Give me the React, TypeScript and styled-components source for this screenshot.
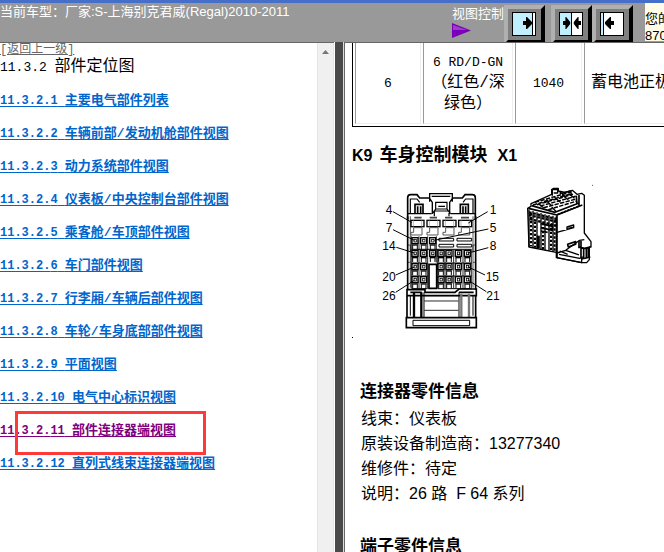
import React from "react";
import styled, { createGlobalStyle } from "styled-components";

const sans = `"Liberation Sans", "Noto Sans CJK SC", sans-serif`;
const mono = `"Liberation Mono", "Noto Sans CJK SC", monospace`;

const GlobalStyle = createGlobalStyle`
  * { box-sizing: border-box; }
  body { margin: 0; background: #fff; color: #000; font-family: ${sans}; }
`;

const Page = styled.div`
  display: grid;
  grid-template-rows: 42px minmax(0, 1fr);
  height: 100vh;
  overflow: hidden;
`;

const Header = styled.header`
  display: flex;
  align-items: flex-start;
  overflow: hidden;
  background: #999;
  border-top: 3px solid #456fc9;
  color: #fff;
  font-size: 13px;
  line-height: 18px;
  white-space: nowrap;
`;

const CarName = styled.div`
  flex: 1;
  min-width: 0;
  overflow: hidden;
`;

const ViewControl = styled.div`
  display: flex;
  flex-direction: column;
  width: 52px;
  padding-top: 2px;

  svg {
    display: block;
  }
`;

const ButtonGroup = styled.div`
  display: flex;
  padding-top: 2px;
`;

const PaneButton = styled.button<{ $gap?: boolean }>`
  flex: none;
  width: 41px;
  height: 39px;
  margin: 0 ${(p) => (p.$gap ? 6 : 0)}px 0 0;
  padding: 3px 4px 4px;
  background: #808080;
  border: 4px solid #000;
  border-top-color: #b0b0b0;
  border-left-color: #b0b0b0;
  overflow: hidden;

  svg {
    display: block;
  }
`;

const Notice = styled.div`
  width: 19px;
  height: 38px;
  margin-left: 12px;
  padding-top: 7px;
  overflow: hidden;
  background: #fffde8;
  color: #000;
  font-size: 13px;
  line-height: 17px;
`;

const Frames = styled.main`
  display: grid;
  grid-template-columns: minmax(0, 334fr) 10px minmax(0, 320fr);
  min-height: 0;
`;

const IndexFrame = styled.nav`
  display: flex;
  min-height: 0;
  overflow: hidden;
  border-top: 1px solid #666;
`;

const IndexBody = styled.div`
  flex: 1;
  min-width: 0;
  padding-top: 1px;
`;

const BackLink = styled.a`
  display: block;
  width: max-content;
  color: #666;
  font: 12px/13px ${mono};
  text-underline-offset: 1px;
`;

const IndexTitle = styled.h1`
  margin: 0;
  font: 16px/20px ${mono};
`;

const TitleNumber = styled.span`
  font-size: 13px;
`;

const IndexList = styled.ul`
  margin: 12px 0 0;
  padding: 0;
  list-style: none;
`;

const IndexItem = styled.li`
  position: relative;
  height: 33px;
  line-height: 18px;
  white-space: nowrap;
`;

const IndexLink = styled.a<{ $visited?: boolean }>`
  color: ${(p) => (p.$visited ? "#800080" : "#0066cc")};
  font: bold 13px/18px ${mono};
  text-underline-offset: 2px;
`;

const LinkNumber = styled.span`
  font-size: 12px;
`;

const Highlight = styled.span`
  position: absolute;
  top: -9px;
  left: 15px;
  width: 191px;
  height: 44px;
  border: 3px solid #ff3838;
  pointer-events: none;
`;

const ScrollTrack = styled.div`
  width: 17px;
  padding: 7px 4px;
  background: #f0f0f0;
  border-left: 1px solid #e4e4e4;
  border-right: 1px solid #e4e4e4;

  svg {
    display: block;
  }
`;

const Splitter = styled.div`
  background: #4a4a4a;
  border-left: 1px solid #fff;
  border-right: 1px solid #ddd;
`;

const DocFrame = styled.article`
  min-width: 0;
  overflow: hidden;
  padding-left: 7px;
  border-top: 1px solid #666;
  border-left: 1px solid #666;
`;

const WireTable = styled.table`
  width: 480px;
  table-layout: fixed;
  border: 1px solid #000;
  border-top: 0;
  border-spacing: 2px 0;
  padding-bottom: 2px;
  font: 16px/21px ${mono};
`;

const WireCell = styled.td<{ $width?: number; $start?: boolean }>`
  width: ${(p) => (p.$width ? `${p.$width}px` : "auto")};
  height: 81px;
  padding: 0 6px;
  border: 1px solid #eee;
  border-top: 0;
  border-left-color: #999;
  text-align: ${(p) => (p.$start ? "left" : "center")};
  vertical-align: middle;
  white-space: nowrap;
`;

const Code = styled.span`
  font-size: 13px;
`;

const ConnectorTitle = styled.h2`
  display: flex;
  align-items: baseline;
  gap: 7px;
  margin: 16px 0 0;
  font: bold 16px/24px ${sans};
`;

const TitleText = styled.span`
  margin-right: 3px;
  font-size: 18px;
`;

const Figure = styled.figure`
  margin: 13px 0 0;

  svg {
    display: block;
  }
`;

const Section = styled.section`
  padding: 39px 8px 0;

  & + & {
    padding-top: 27px;
  }
`;

const SectionTitle = styled.h3`
  margin: 0;
  font: bold 17px/28px ${sans};
`;

const Fact = styled.p`
  margin: 0;
  padding-left: 1px;
  font-size: 16px;
  line-height: 25px;
  white-space: pre;
`;

const links = [
  "主要电气部件列表",
  "车辆前部/发动机舱部件视图",
  "动力系统部件视图",
  "仪表板/中央控制台部件视图",
  "乘客舱/车顶部件视图",
  "车门部件视图",
  "行李厢/车辆后部件视图",
  "车轮/车身底部部件视图",
  "平面视图",
  "电气中心标识视图",
  "部件连接器端视图",
  "直列式线束连接器端视图",
];
const currentLink = 10;

const arrow = "M0 -2h3v-4h1l5 5v2l-5 5h-1v-4h-3z";

function PaneIcon({ kind }: { kind: "right" | "center" | "left" }) {
  const split = { right: 20, center: 12, left: 3 }[kind];
  return (
    <svg width="24" height="24" viewBox="0 0 24 24">
      <rect x=".5" y=".5" width="23" height="23" fill="#fff" stroke="#000" />
      <rect x="1" y="1" width={split - 1} height="22" fill="#c0f0ff" />
      <path d={`M${split + 0.5} 0v24`} stroke="#000" />
      {kind === "right" && <path d={arrow} transform="translate(11 11)" />}
      {kind === "center" && (
        <>
          <path d={arrow} transform="translate(4 11) scale(.8 1)" />
          <path d={arrow} transform="translate(22 11) scale(-.8 1)" />
        </>
      )}
      {kind === "left" && <path d={arrow} transform="translate(14 11) scale(-1 1)" />}
    </svg>
  );
}

const pinRows = [
  { y: 179, xs: [120, 146, 173] },
  { y: 217, xs: [120, 146, 173, 198, 222, 250, 277] },
  { y: 257, xs: [120, 146, 198, 222, 250, 277] },
  { y: 296, xs: [120, 146, 198, 222, 250, 277] },
];

const callouts = [
  { n: "4", x: 32, y: 100, line: "M54 92L110 124" },
  { n: "7", x: 32, y: 154, line: "M54 146L118 178" },
  { n: "14", x: 22, y: 208, line: "M64 199L118 216" },
  { n: "20", x: 22, y: 300, line: "M62 282L118 258" },
  { n: "26", x: 22, y: 356, line: "M62 334L118 298" },
  { n: "1", x: 344, y: 100, line: "M338 92L280 126" },
  { n: "5", x: 344, y: 154, line: "M340 144L178 178" },
  { n: "8", x: 344, y: 208, line: "M340 200L280 216" },
  { n: "15", x: 332, y: 300, line: "M330 282L280 258" },
  { n: "21", x: 334, y: 356, line: "M334 332L280 298" },
];

function FrontView() {
  return (
    <g fill="none" stroke="#000" strokeWidth="3.5">
      <path d="M98 116V50q0-9 9-9H126l8 10h30M232 51h30l8-10h22q9 0 9 9V116" strokeWidth="5" />
      <path d="M106 98V54h20l8 10M294 98V54h-22l-8 10M98 98h72M226 98h76" />
      <path d="M164 62V38H232V62M170 46h56M164 52l8 12v34M232 52l-8 12v34" strokeWidth="4" />
      <path d="M172 98l10-14V64h34v20l10 14M182 84h34M178 106V90h44v16M190 76h20" />
      <path d="M120 98V70h24V98M256 98V70h24V98M128 96V76M137 96V76M264 96V76M272 96V76" strokeWidth="5" />
      <path d="M98 106V326M302 106V326" strokeWidth="5" />
      <path d="M106 106V320M294 106V320M98 192h8v20M302 192h-8v20M98 244h8M294 244h8" strokeWidth="2" />
      <path d="M118 110h22M164 110h22M210 110h22M258 110h24" strokeWidth="5" stroke="#444" />
      {[108, 156, 204, 251].map((x) => (
        <g key={x}>
          <rect x={x} y="118" width="39" height="19" strokeWidth="4" />
          <path d={`M${x + 7} 118v19M${x + 32} 118v19`} stroke="#999" strokeWidth="2" />
          <path d={`M${x + 8} 140v14h-8v8h33v-22z`} stroke="#555" strokeWidth="3" />
        </g>
      ))}
      {[192, 246].map((x) => (
        <path key={x} d={`M${x} 172h44v8h-44zM${x} 190h44v8h-44z`} strokeWidth="3" />
      ))}
      <path d="M109 166V322M132 166V322M158 166V322M184 166V245M188 206V322M210 206V322M236 206V322M264 206V322M289 206V322" strokeWidth="2.5" />
      <path d="M110 205h180M110 246h48M188 246h102M110 285h48M188 285h102M110 323h48M188 323h102" strokeWidth="3" />
      {pinRows.map((row) =>
        row.xs.map((x) => (
          <g key={`${row.y}-${x}`}>
            <rect x={x - 9} y={row.y - 9} width="18" height="18" strokeWidth="4" />
            <rect x={x - 3} y={row.y - 4} width="7" height="8" strokeWidth="2.5" />
            <path d={`M${x - 9} ${row.y + 13}h18`} strokeWidth="4" />
            <path d={`M${x - 7} ${row.y + 14}v12M${x + 7} ${row.y + 14}v12`} strokeWidth="3" />
          </g>
        ))
      )}
      <path d="M162 322V250h23V322z" strokeWidth="5" fill="#fff" />
      <path d="M96 326H150V334H240L252 324H304V344H96zM106 334H140M252 334H296" strokeWidth="5" />
      <path d="M96 344V410M302 344V410" strokeWidth="5" />
      <path d="M106 344V404M294 344V404M147 334V410M252 334V410" strokeWidth="3" />
      <path d="M117 334V410M139 334V410" strokeWidth="7" />
      <path d="M259 338V410M282 338V410" stroke="#777" strokeWidth="7" />
      <path d="M148 344h102M148 360h102M148 388h102" strokeWidth="2.5" />
      <path d="M94 410H304V440H94z" strokeWidth="5" />
      <path d="M114 418H284V434H114z" strokeWidth="3" />
      {callouts.map((c) => (
        <g key={c.n}>
          <path d={c.line} strokeWidth="3" />
          <text x={c.x} y={c.y} fontSize="36" fill="#000" stroke="none">
            {c.n}
          </text>
        </g>
      ))}
    </g>
  );
}

function SideView() {
  return (
    <g fill="none" stroke="#000" strokeWidth="4" strokeLinejoin="round">
      <path d="M68 112L78 106V98L92 92L140 70V56l6-4h14v8l20 4 22-6 14 12 14-3 8 6V186l20 26v16h-5v38l-8 9H230L154 260V244L72 228z" fill="#fff" />
      <path d="M156 132V260M70 112L156 132L232 102M80 104L150 124L222 96M214 74L216 100M222 72V104" strokeWidth="5" />
      <path d="M90 94L200 62M96 101L204 70M106 105L212 76M116 110L214 84M130 116L216 90M84 102l116-34" strokeWidth="4.5" strokeDasharray="13 4" />
      <path d="M100 98l16 12M122 88l18 16M148 78l18 16M172 72l18 14M192 68l16 14M140 108l14 14M164 62l16 14" />
      <path d="M142 74V56h16v10h-12M164 68l32-8 4 16" />
      <path d="M72 124L154 144M72 132L154 152M74 144L154 164" strokeWidth="7" strokeDasharray="8 5" />
      <path d="M72 116V228M84 120V230M96 124V232M108 126V236M120 130V238M132 132V240M144 134V242M154 136V244" />
      <path d="M78 126V226M90 152V230M114 156V236M138 158V240M149 148V242" strokeWidth="6" strokeDasharray="7 5" />
      <path d="M100 194V232" strokeWidth="9" />
      <path d="M108 158l34 8v12l-34-8M108 180l20 4" strokeWidth="5" />
      <path d="M158 130L220 106" strokeWidth="5" strokeDasharray="7 3" />
      <path d="M156 184L206 170V162L186 168V178M190 172l12-3" />
      <path d="M156 246L182 238L224 208L238 206M162 250L224 262L234 258M156 260L230 275V264L256 258M182 238L222 252M164 240l24 10" />
      <path d="M188 220l24-8v8l-22 8zM222 210V232M228 210V260M236 230V262M244 234V262M250 232V260M224 228L238 232L256 228" strokeWidth="5" />
      <path d="M261 43h3" strokeWidth="2" />
    </g>
  );
}

export default function App() {
  return (
    <>
      <GlobalStyle />
      <Page>
        <Header>
          <CarName>当前车型：厂家:S-上海别克君威(Regal)2010-2011</CarName>
          <ViewControl>
            <span>视图控制</span>
            <svg width="19" height="15" viewBox="0 0 19 15">
              <path d="M0 0L19 7.5L0 15z" fill="#7a00b8" />
              <path d="M1 2L15 7H1z" fill="#9c3cd0" />
            </svg>
          </ViewControl>
          <ButtonGroup>
            <PaneButton $gap aria-label="向右展开">
              <PaneIcon kind="right" />
            </PaneButton>
            <PaneButton aria-label="居中">
              <PaneIcon kind="center" />
            </PaneButton>
            <PaneButton aria-label="向左展开">
              <PaneIcon kind="left" />
            </PaneButton>
          </ButtonGroup>
          <Notice>
            您的
            <br />
            870
          </Notice>
        </Header>
        <Frames>
          <IndexFrame>
            <IndexBody>
              <BackLink href="#up">[返回上一级]</BackLink>
              <IndexTitle>
                <TitleNumber>11.3.2 </TitleNumber>部件定位图
              </IndexTitle>
              <IndexList>
                {links.map((label, i) => (
                  <IndexItem key={label}>
                    <IndexLink href={`#s${i + 1}`} $visited={i === currentLink}>
                      <LinkNumber>11.3.2.{i + 1} </LinkNumber>
                      {label}
                    </IndexLink>
                    {i === currentLink && <Highlight />}
                  </IndexItem>
                ))}
              </IndexList>
            </IndexBody>
            <ScrollTrack>
              <svg width="7" height="4" viewBox="0 0 7 4">
                <path d="M0 4L3.5 0L7 4z" fill="#777" />
              </svg>
            </ScrollTrack>
          </IndexFrame>
          <Splitter />
          <DocFrame>
            <WireTable>
              <tbody>
                <tr>
                  <WireCell $width={66}>
                    <Code>6</Code>
                  </WireCell>
                  <WireCell $width={90}>
                    <Code>6 RD/D-GN</Code>
                    <br />
                    （红色/深
                    <br />
                    绿色）
                  </WireCell>
                  <WireCell $width={67}>
                    <Code>1040</Code>
                  </WireCell>
                  <WireCell $start>蓄电池正极</WireCell>
                </tr>
              </tbody>
            </WireTable>
            <ConnectorTitle>
              <span>K9</span>
              <TitleText>车身控制模块</TitleText>
              <span>X1</span>
            </ConnectorTitle>
            <Figure>
              <svg width="245" height="158" viewBox="0 0 245 158" role="img" aria-label="K9 X1">
                <g transform="translate(23 0) scale(.3333)">
                  <FrontView />
                </g>
                <g transform="translate(153 -10) scale(.3333)">
                  <SideView />
                </g>
                <rect x="0" y="156" width="1" height="1" />
              </svg>
            </Figure>
            <Section>
              <SectionTitle>连接器零件信息</SectionTitle>
              <Fact>线束：仪表板</Fact>
              <Fact>原装设备制造商：13277340</Fact>
              <Fact>维修件：待定</Fact>
              <Fact>说明：26 路  F 64 系列</Fact>
            </Section>
            <Section>
              <SectionTitle>端子零件信息</SectionTitle>
            </Section>
          </DocFrame>
        </Frames>
      </Page>
    </>
  );
}
